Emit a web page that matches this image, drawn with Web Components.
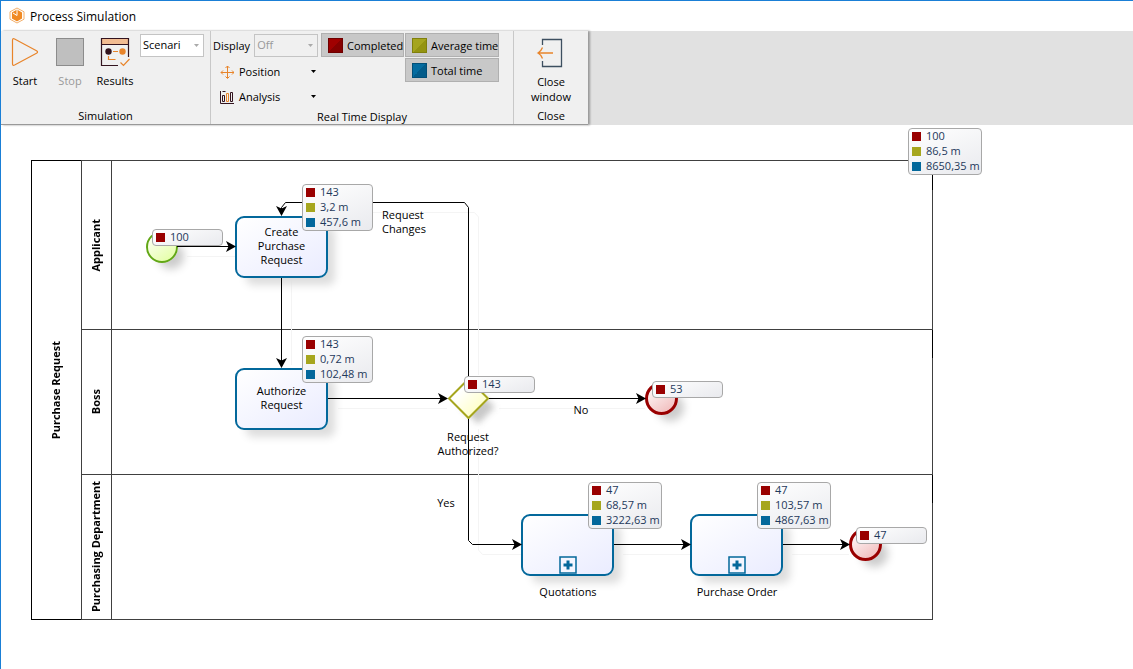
<!DOCTYPE html>
<html lang="en">
<head>
<meta charset="utf-8">
<title>Process Simulation</title>
<style>
html, body { margin: 0; height: 100%; }
body { font: 12px/15px "Open Sans", "Noto Sans", sans-serif; color: #000; background: #fff; overflow: hidden; }
</style>
</head>
<body>
<app-window>
  <span slot="title">Process Simulation</span>
  <ribbon-bar slot="ribbon">
    <ribbon-group label="Simulation">
      <tool-button label="Start">
        <svg width="30" height="30" viewBox="0 0 30 30" fill="none" stroke="#e8842a" stroke-width="1.2"><path d="M2.5 3.2Q2.5 1 4.6 2L26.5 13.8Q28.6 15 26.5 16.2L4.6 28Q2.5 29 2.5 26.8Z"/></svg>
      </tool-button>
      <tool-button label="Stop" disabled>
        <svg width="30" height="30" viewBox="0 0 30 30"><rect x="1.5" y="1.5" width="27" height="27" fill="#bfbfbf" stroke="#8c8c8c"/></svg>
      </tool-button>
      <tool-button label="Results">
        <svg width="30" height="30" viewBox="0 0 30 30" fill="none"><rect x="2" y="2" width="27" height="6" fill="#f2bc92"/><path d="M18 28.500H1.500V1.500H28.500V20M1.500 7.500H28.500" stroke="#33141f" stroke-width="1.200"/><circle cx="8.500" cy="14.500" r="3.200" fill="#33141f"/><circle cx="22.500" cy="14.500" r="3.200" fill="#e8842a"/><path d="M13 14.500h5M8.500 19v3.500h7M20.500 25.500l3 3 6-6.500" stroke="#e8842a" stroke-width="1.200"/></svg>
      </tool-button>
      <ribbon-select name="Scenario" value="Scenari"></ribbon-select>
    </ribbon-group>
    <ribbon-group label="Real Time Display">
      <display-controls></display-controls>
    </ribbon-group>
    <ribbon-group label="Close">
      <tool-button label="Close window" wide>
        <svg width="30" height="32" viewBox="0 0 30 32" fill="none" stroke-width="1.300"><path d="M6.500 8V2.500H25.500V29.500H6.500V24" stroke="#3d4f60"/><path d="M17 16H2M6.500 10.500Q5 14.500 2 16Q5 17.500 6.500 21.500" stroke="#e8842a"/></svg>
      </tool-button>
    </ribbon-group>
  </ribbon-bar>

  <process-canvas slot="canvas">
    <bpmn-pool label="Purchase Request">
      <bpmn-lane label="Applicant" style="--size:168px"></bpmn-lane>
      <bpmn-lane label="Boss" style="--size:144px"></bpmn-lane>
      <bpmn-lane label="Purchasing Department" style="--size:144px"></bpmn-lane>
    </bpmn-pool>

    <flow-shadows></flow-shadows>

    <bpmn-event kind="start" style="--x:145px;--y:106px"></bpmn-event>
    <bpmn-task style="--x:234px;--y:91px">Create Purchase Request</bpmn-task>
    <bpmn-task style="--x:234px;--y:243px">Authorize Request</bpmn-task>
    <bpmn-gateway style="--x:447px;--y:253px"></bpmn-gateway>
    <bpmn-event kind="end" style="--x:644px;--y:257px"></bpmn-event>
    <bpmn-task sub style="--x:520px;--y:389px"></bpmn-task>
    <bpmn-task sub style="--x:689px;--y:389px"></bpmn-task>
    <bpmn-event kind="end" style="--x:848px;--y:403px"></bpmn-event>

    <flow-label style="--x:381px;--y:83px;--w:60px">Request Changes</flow-label>
    <flow-label center style="--x:427px;--y:305px;--w:80px">Request Authorized?</flow-label>
    <flow-label center style="--x:560px;--y:278px;--w:40px">No</flow-label>
    <flow-label center style="--x:425px;--y:371px;--w:40px">Yes</flow-label>
    <flow-label center style="--x:517px;--y:460px;--w:100px">Quotations</flow-label>
    <flow-label center style="--x:686px;--y:460px;--w:100px">Purchase Order</flow-label>

    <flow-edges></flow-edges>

    <stat-tag completed="100" style="--x:151px;--y:104px"></stat-tag>
    <stat-tag completed="143" average="3,2 m" total="457,6 m" style="--x:301px;--y:59px"></stat-tag>
    <stat-tag completed="143" average="0,72 m" total="102,48 m" style="--x:301px;--y:211px"></stat-tag>
    <stat-tag completed="143" style="--x:463px;--y:251px"></stat-tag>
    <stat-tag completed="53" style="--x:651px;--y:256px"></stat-tag>
    <stat-tag completed="47" average="68,57 m" total="3222,63 m" style="--x:587px;--y:357px"></stat-tag>
    <stat-tag completed="47" average="103,57 m" total="4867,63 m" style="--x:756px;--y:357px"></stat-tag>
    <stat-tag completed="47" style="--x:855px;--y:402px"></stat-tag>
    <stat-tag completed="100" average="86,5 m" total="8650,35 m" style="--x:907px;--y:3px"></stat-tag>
  </process-canvas>
</app-window>

<script>
const define = (name, render) => customElements.define(name, class extends HTMLElement {
  constructor() {
    super();
    this.attachShadow({ mode: 'open' });
  }
  connectedCallback() {
    this.shadowRoot.innerHTML = render(this);
  }
});

define('app-window', () => `
  <style>
    :host { display: flex; flex-direction: column; min-height: 100vh; box-sizing: border-box; border-top: 1px solid #1a7fd6; border-left: 1px solid #1a7fd6; }
    header { display: flex; align-items: center; gap: 5px; height: 30px; padding-left: 8px; }
    h1 { margin: 0; font-size: 12px; font-weight: 400; }
    main { flex: 1; }
  </style>
  <header>
    <svg width="16" height="18" viewBox="0 0 16 18"><path d="M8 1L15 4.800V12.200L8 16L1 12.200V4.800Z" fill="#fff" stroke="#f3b06c"/><path d="M8 3.500L12.300 5.800V11.200L8 13.500L3.700 11.200V5.800Z" fill="#f08a24" stroke="#f08a24" stroke-width="1.500" stroke-linejoin="round"/><path d="M8 8.500V3M8 8.500L4 6" stroke="#fff" stroke-width="1"/></svg>
    <h1><slot name="title"></slot></h1>
  </header>
  <slot name="ribbon"></slot>
  <main><slot name="canvas"></slot></main>`);

define('ribbon-bar', () => `
  <style>
    :host { display: block; background: #e1e1e1; font-size: 11px; }
    nav { display: inline-flex; vertical-align: top; background: #f0f0f0; border-bottom: 1px solid #999; box-shadow: 2px 0 2px #999; height: 93px; }
    ::slotted(*) { border-right: 1px solid #c8c8c8; }
    ::slotted(:last-child) { border-right: 0; }
  </style>
  <nav aria-label="Ribbon"><slot></slot></nav>`);

define('ribbon-group', el => `
  <style>
    :host { display: flex; flex-direction: column; }
    .body { flex: 1; display: flex; align-items: flex-start; padding: 2px 6px 0 2px; }
    footer { text-align: center; padding-bottom: 1px; }
    ::slotted(ribbon-select) { margin: 1px 0 0 2px; }
  </style>
  <div class="body"><slot></slot></div>
  <footer>${el.getAttribute('label')}</footer>`);

define('tool-button', el => `
  <style>
    :host { display: block; width: 44px; margin-right: 1px; }
    :host([wide]) { width: 66px; margin: 0 -2px 0 2px; }
    button { display: flex; flex-direction: column; align-items: center; gap: 6px; width: 100%; padding: 4px 0 0; border: 0; background: none; font: inherit; line-height: 15px; color: #000; }
    span { max-width: 50px; }
    :host([wide]) button { gap: 5px; }
    button:disabled { color: #999; }
  </style>
  <button ${el.hasAttribute('disabled') ? 'disabled' : ''}><slot></slot><span>${el.getAttribute('label')}</span></button>`);

define('ribbon-select', el => `
  <style>
    :host { display: inline-grid; width: 64px; height: 23px; }
    select, svg { grid-area: 1 / 1; }
    select { appearance: none; width: 100%; margin: 0; padding: 0 0 2px 2px; border: 1px solid #c4c4c4; border-radius: 0; background: #fff; font: inherit; color: #000; opacity: 1; }
    select:disabled { background: #f0f0f0; color: #999; }
    svg { justify-self: end; align-self: center; margin-right: 4px; pointer-events: none; }
  </style>
  <select aria-label="${el.getAttribute('name')}" ${el.hasAttribute('disabled') ? 'disabled' : ''}><option>${el.getAttribute('value')}</option></select>
  <svg width="7" height="4" viewBox="0 0 7 4"><path d="M1 0H6L3.500 3Z" fill="#aaa"/></svg>`);

define('metric-toggle', () => `
  <style>
    :host { display: block; }
    button { display: flex; align-items: center; gap: 4px; width: 100%; height: 24px; padding: 0 1px 0 6px; border: 1px solid #b0b0b0; background: #c8c8c8; font: inherit; color: #000; white-space: nowrap; }
    i { flex: none; width: 13px; height: 13px; border: 1px solid var(--edge); background: linear-gradient(135deg, var(--light) 50%, var(--dark) 50%); }
  </style>
  <button aria-pressed="true"><i></i><slot></slot></button>`);

define('menu-button', () => `
  <style>
    :host { display: block; }
    button { display: flex; align-items: center; gap: 5px; width: 108px; height: 25px; padding: 0 4px 0 7px; border: 0; background: none; font: inherit; color: #000; }
    .arrow { margin-left: auto; }
  </style>
  <button aria-haspopup="menu"><slot name="icon"></slot><slot></slot><svg class="arrow" width="7" height="4" viewBox="0 0 7 4"><path d="M1 0H6L3.500 3Z" fill="#000"/></svg></button>`);

define('display-controls', () => `
  <style>
    :host { display: flex; margin-right: 8px; }
    .row { display: flex; align-items: center; gap: 4px; height: 23px; margin: 1px 0 2px; }
    .metrics { display: grid; grid-template-columns: 83px 94px; align-content: start; gap: 1px; }
    .total { grid-column: 2; }
  </style>
  <div>
    <div class="row"><span>Display</span><ribbon-select name="Display" value="Off" disabled></ribbon-select></div>
    <menu-button><svg slot="icon" width="14" height="14" viewBox="0 0 14 14" fill="none" stroke="#e8842a"><path d="M7.500 1V13M1 7.500H14M5.500 3L7.500 1L9.500 3M5.500 11.500L7.500 13.500L9.500 11.500M3 5.500L1 7.500L3 9.500M12 5.500L14 7.500L12 9.500"/></svg>Position</menu-button>
    <menu-button><svg slot="icon" width="14" height="14" viewBox="0 0 14 14" fill="none"><path d="M.5 1V13.500H14M2.500 1.500h3" stroke="#33141f"/><path d="M2.500 5.500h2v6h-2ZM10.500 2.500h2v9h-2Z" stroke="#33141f"/><path d="M6.500 3.500h2v8h-2Z" stroke="#e8842a"/></svg>Analysis</menu-button>
  </div>
  <div class="metrics">
    <metric-toggle style="--light:#a00000;--dark:#850000;--edge:#6e0000">Completed</metric-toggle>
    <metric-toggle style="--light:#a5a51e;--dark:#949411;--edge:#80800c">Average time</metric-toggle>
    <metric-toggle class="total" style="--light:#046ca0;--dark:#035c8a;--edge:#024f78">Total time</metric-toggle>
  </div>`);

define('process-canvas', () => `
  <style>
    :host { display: block; position: relative; padding: 35px 30px 49px; font-size: 11px; line-height: 14px; }
  </style>
  <slot></slot>`);

define('bpmn-pool', el => `
  <style>
    :host { display: flex; width: 902px; box-sizing: border-box; border: 1px solid #404040; border-left-color: #000; }
    .name { display: flex; align-items: center; justify-content: center; width: 47px; padding-right: 2px; }
    b { writing-mode: vertical-rl; transform: rotate(180deg); }
    .lanes { flex: 1; display: flex; flex-direction: column; border-left: 1px solid #404040; }
    ::slotted(*) { border-bottom: 1px solid #404040; }
    ::slotted(:last-child) { border-bottom: 0; }
  </style>
  <div class="name"><b>${el.getAttribute('label')}</b></div>
  <div class="lanes"><slot></slot></div>`);

define('bpmn-lane', el => `
  <style>
    :host { display: flex; height: var(--size); }
    .name { display: flex; align-items: center; justify-content: center; width: 27px; padding-right: 2px; border-right: 1px solid #404040; }
    b { writing-mode: vertical-rl; transform: rotate(180deg); white-space: nowrap; }
  </style>
  <div class="name"><b>${el.getAttribute('label')}</b></div>`);

define('bpmn-task', el => `
  <style>
    :host { position: absolute; left: var(--x); top: var(--y); display: flex; align-items: center; justify-content: center; box-sizing: border-box; width: 93px; height: 62px; border: 2px solid #03689b; border-radius: 9px; background: linear-gradient(150deg, #fff, #eaecff); box-shadow: 9px 9px 8px -2px #ddd; text-align: center; }
    span { width: 60px; padding-bottom: 2px; }
    svg { align-self: flex-end; }
  </style>
  ${el.hasAttribute('sub')
    ? '<svg width="18" height="18" viewBox="0 0 18 18"><rect x="1" y="1" width="16" height="16" fill="#f4f6ff" stroke="#03689b" stroke-width="1.500"/><path d="M9 4.500V13.500M4.500 9H13.500" stroke="#03689b" stroke-width="3"/></svg>'
    : '<span><slot></slot></span>'}`);

define('bpmn-event', () => `
  <style>
    :host { position: absolute; left: var(--x); top: var(--y); box-sizing: border-box; width: 33px; height: 33px; border-radius: 50%; box-shadow: 9px 9px 8px -3px #ccc; }
    :host([kind=start]) { width: 32px; height: 32px; border: 2px solid #62a716; background: linear-gradient(145deg, #fff, #e2ff9e); }
    :host([kind=end]) { border: 3px solid #900; background: linear-gradient(145deg, #fff, #f0b8b8); }
  </style>`);

define('bpmn-gateway', () => `
  <style>:host { position: absolute; left: var(--x); top: var(--y); } svg { display: block; overflow: visible; }</style>
  <svg width="41" height="41" viewBox="0 0 41 41">
    <defs>
      <linearGradient id="g" x1="0" y1="0" x2="1" y2="1"><stop offset=".3" stop-color="#fff"/><stop offset="1" stop-color="#ffffb0"/></linearGradient>
      <filter id="b" x="-50%" y="-50%" width="200%" height="200%"><feGaussianBlur stdDeviation="3"/></filter>
    </defs>
    <path d="M30 13L47 29L30 46L13 29Z" fill="#bbb" opacity=".8" filter="url(#b)"/>
    <path d="M20.500 1L40 20.500L20.500 40L1 20.500Z" fill="url(#g)" stroke="#a6a61e" stroke-width="2"/>
  </svg>`);

define('flow-label', () => `
  <style>
    :host { position: absolute; left: var(--x); top: var(--y); width: var(--w); }
    :host([center]) { text-align: center; }
  </style>
  <slot></slot>`);

define('stat-tag', el => {
  const metrics = [['completed', '#900'], ['average', '#a6a61e'], ['total', '#03689b']];
  const rows = metrics.filter(([key]) => el.hasAttribute(key));
  return `
  <style>
    :host { position: absolute; left: var(--x); top: var(--y); box-sizing: border-box; min-width: 71px; border: 1px solid #a8a8a8; border-radius: 4px; background: linear-gradient(160deg, #fff, #e9eaee); color: #1e395b; line-height: 14px; padding: 0 1px 1px 3px; }
    ul { display: grid; gap: 1px; list-style: none; margin: 0; padding: 0; }
    li { display: flex; align-items: center; gap: 5px; white-space: nowrap; }
    i { width: 9px; height: 9px; }
  </style>
  <ul>${rows.map(([key, color]) => `<li><i style="background:${color}"></i>${el.getAttribute(key)}</li>`).join('')}</ul>`;
});

define('flow-shadows', () => `
  <style>
    :host { position: absolute; left: 0; top: 0; pointer-events: none; }
    svg { display: block; }
  </style>
  <svg width="940" height="500" viewBox="0 0 940 500" fill="none">
    <path d="M186 131.500H234M290.500 154V240M337 283.500H446M498 283.500H644M477.500 250V92L473.500 87.500H372M477.500 304V425L481.500 429.500H520M622 429.500H689M791 429.500H848" stroke="#f4f4f4"/>
  </svg>`);

define('flow-edges', () => {
  const paths = [
    'M176 121.500H233', 'M280.500 153V242', 'M327 273.500H446', 'M488 273.500H644',
    'M467.500 254V82.500L463.500 77.500H284.500L280.500 82.500V90',
    'M467.500 294V415.500L471.500 419.500H520', 'M613 419.500H689', 'M782 419.500H848'
  ];
  const heads = [[235, 121.5, 0], [280.5, 243, 90], [447, 273.5, 0], [645, 273.5, 0], [280.5, 91, 90], [521, 419.5, 0], [690, 419.5, 0], [849, 419.5, 0]];
  return `
  <style>
    :host { position: absolute; left: 0; top: 0; pointer-events: none; }
    svg { display: block; }
  </style>
  <svg width="940" height="500" viewBox="0 0 940 500" fill="none">
    <g stroke="#000">${paths.map(d => `<path d="${d}"/>`).join('')}</g>
    <path d="M931.500 35V65M931.500 205V233M931.500 350V378M30 35.500H80M30 494.500H80" stroke="#000"/>
    <g fill="#000">${heads.map(([x, y, a]) => `<path d="M0 0L-10 5.500L-7.500 0L-10 -5.500Z" transform="translate(${x} ${y}) rotate(${a})"/>`).join('')}</g>
  </svg>`;
});
</script>
</body>
</html>
